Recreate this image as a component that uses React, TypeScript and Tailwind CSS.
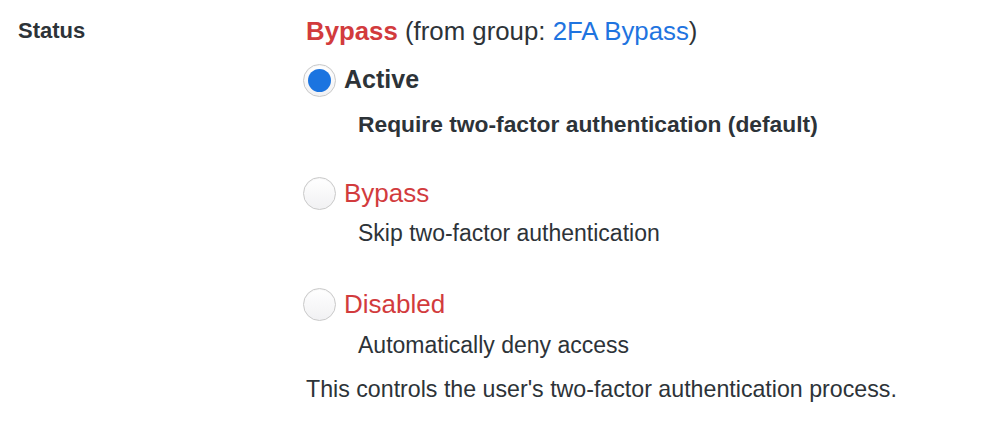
import React, { useState } from "react";

type Mode = "active" | "bypass" | "disabled";

const options: {
  id: Mode;
  label: string;
  desc: string;
  rowMt: string;
  descMt: string;
}[] = [
  {
    id: "active",
    label: "Active",
    desc: "Require two-factor authentication (default)",
    rowMt: "mt-[14px]",
    descMt: "mt-[12px]",
  },
  {
    id: "bypass",
    label: "Bypass",
    desc: "Skip two-factor authentication",
    rowMt: "mt-[37px]",
    descMt: "mt-[8px]",
  },
  {
    id: "disabled",
    label: "Disabled",
    desc: "Automatically deny access",
    rowMt: "mt-[39px]",
    descMt: "mt-[9px]",
  },
];

function Radio({ checked }: { checked: boolean }) {
  return (
    <span className="flex h-[33px] w-[33px] shrink-0 items-center justify-center rounded-full border-[1.5px] border-[#c9c9c9] bg-gradient-to-b from-white to-[#f1f1f3] shadow-[inset_0_1px_1px_rgba(0,0,0,0.04)]">
      {checked && <span className="h-[23px] w-[23px] rounded-full bg-[#1b74e0]" />}
    </span>
  );
}

export default function App() {
  const [mode, setMode] = useState<Mode>("active");

  return (
    <div
      className="min-h-screen bg-white text-[#2d3338]"
      style={{ fontFamily: '"Liberation Sans", Arial, sans-serif' }}
    >
      <div className="grid grid-cols-[288px_1fr] pl-[18px] pt-[13px]">
        {/* Label */}
        <div className="text-[22px] font-bold leading-[36px]">Status</div>

        {/* Field */}
        <div className="flex flex-col">
          <div className="text-[25.8px] leading-[36px]">
            <span className="font-bold text-[#d23b3d]">Bypass</span> (from group:{" "}
            <a className="text-[#1f74e0]" href="#">
              2FA Bypass
            </a>
            )
          </div>

          {options.map((o) => {
            const checked = mode === o.id;
            return (
              <div key={o.id} className="flex flex-col">
                <label
                  className={`-ml-[3px] flex h-[34px] cursor-pointer items-center gap-[8px] ${o.rowMt}`}
                  onClick={() => setMode(o.id)}
                >
                  <Radio checked={checked} />
                  <span
                    className={
                      checked
                        ? "text-[25px] font-bold text-[#2d3338]"
                        : "text-[26px] text-[#d23b3d]"
                    }
                  >
                    {o.label}
                  </span>
                </label>
                <div
                  className={`pl-[52px] leading-[30px] ${o.descMt} ${
                    checked ? "text-[22.8px] font-bold" : "text-[23px]"
                  }`}
                >
                  {o.desc}
                </div>
              </div>
            );
          })}

          <p className="mt-[14px] text-[23.2px] leading-[30px]">
            This controls the user's two-factor authentication process.
          </p>
        </div>
      </div>
    </div>
  );
}
